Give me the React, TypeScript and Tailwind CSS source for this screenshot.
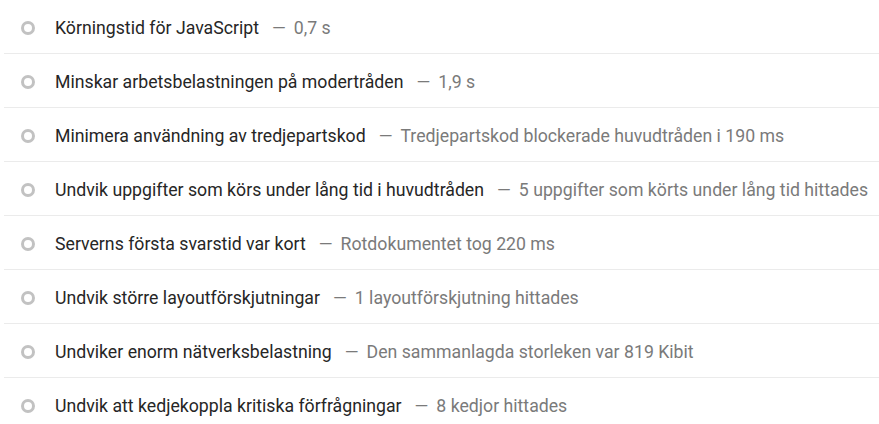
const audits = [
    { title: "Körningstid för JavaScript", detail: "0,7 s" },
    { title: "Minskar arbetsbelastningen på modertråden", detail: "1,9 s" },
    { title: "Minimera användning av tredjepartskod", detail: "Tredjepartskod blockerade huvudtråden i 190 ms" },
    { title: "Undvik uppgifter som körs under lång tid i huvudtråden", detail: "5 uppgifter som körts under lång tid hittades" },
    { title: "Serverns första svarstid var kort", detail: "Rotdokumentet tog 220 ms" },
    { title: "Undvik större layoutförskjutningar", detail: "1 layoutförskjutning hittades" },
    { title: "Undviker enorm nätverksbelastning", detail: "Den sammanlagda storleken var 819 Kibit" },
    { title: "Undvik att kedjekoppla kritiska förfrågningar", detail: "8 kedjor hittades" },
];

const App: React.FC = () => {
    return (
        <div className="w-[879px] h-[424px] overflow-hidden bg-white pl-[4px]" style={{ fontFamily: 'Roboto, "Liberation Sans", sans-serif' }}>
            {audits.map((audit, i) => (
                <div key={i} className="h-[54px] pt-[3px] flex items-center border-b border-[#ebebeb]">
                    {/* Informative circle */}
                    <span className="ml-[17px] w-[14px] h-[14px] rounded-full border-[3px] border-[#c2c2c2] shrink-0" />
                    <div className="ml-[20px] text-[17.7px] whitespace-nowrap">
                        <span className="text-[#262626]">{audit.title}</span>
                        <span className="text-[#7a7a7a] ml-[13px]">—</span>
                        <span className="text-[#7a7a7a] ml-[8px]">{audit.detail}</span>
                    </div>
                </div>
            ))}
        </div>
    );
};

export default App;
